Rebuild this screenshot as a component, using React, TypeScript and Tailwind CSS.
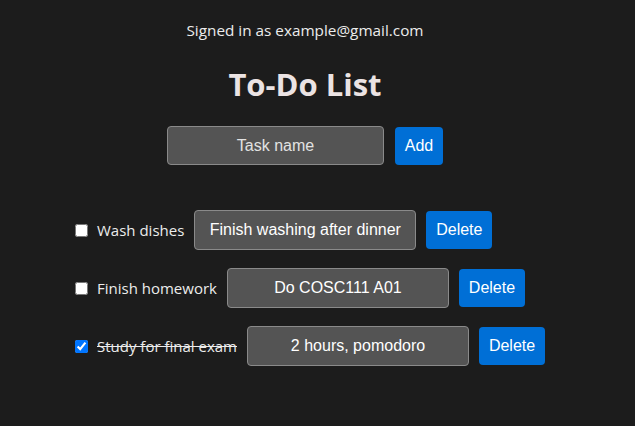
import React, { useState } from 'react';

interface Task {
  id: number;
  name: string;
  note: string;
  done: boolean;
}

const ui = { fontFamily: '"Open Sans", "Noto Sans", sans-serif' };
const arial = { fontFamily: '"Liberation Sans", Arial, sans-serif' };

export default function App() {
  const [tasks, setTasks] = useState<Task[]>([
    { id: 1, name: 'Wash dishes', note: 'Finish washing after dinner', done: false },
    { id: 2, name: 'Finish homework', note: 'Do COSC111 A01', done: false },
    { id: 3, name: 'Study for final exam', note: '2 hours, pomodoro', done: true },
  ]);
  const [draft, setDraft] = useState('');

  const toggle = (id: number) =>
    setTasks((t) => t.map((x) => (x.id === id ? { ...x, done: !x.done } : x)));

  return (
    <div className="min-h-[426px] w-full bg-[#1c1c1c] text-[#ececec]" style={ui}>
      <div className="flex flex-col items-center pt-[20px] pr-[25px]">
        <p className="text-[15.3px] leading-[20px]">Signed in as example@gmail.com</p>
        <h1 className="mt-[22px] text-[31px] font-bold leading-[44px] text-[#ebe3e3]">To-Do List</h1>

        {/* New task */}
        <div className="mt-[20px] flex items-center gap-[11px]">
          <input
            value={draft}
            onChange={(e) => setDraft(e.target.value)}
            placeholder="Task name"
            className="h-[39px] w-[217px] rounded-[4px] border border-[#8a8a8a] bg-[#545454] text-center text-[16px] text-white placeholder:text-[#e2e2e2] outline-none"
            style={arial}
          />
          <button
            className="h-[38px] w-[48px] rounded-[4px] bg-[#006fd6] text-[16px] text-white"
            style={arial}
          >
            Add
          </button>
        </div>
      </div>

      {/* Task rows */}
      <div className="mt-[45px] flex flex-col gap-[18px] pl-[75px]">
        {tasks.map((t) => (
          <div key={t.id} className="flex items-center">
            <input
              type="checkbox"
              checked={t.done}
              onChange={() => toggle(t.id)}
              className="m-0 h-[13px] w-[13px] accent-[#0075ff]"
            />
            <span
              className={`ml-[9px] text-[15px] ${t.done ? 'line-through' : ''}`}
            >
              {t.name}
            </span>
            <input
              defaultValue={t.note}
              className="ml-[10px] h-[40px] w-[222px] rounded-[4px] border border-[#8a8a8a] bg-[#545454] text-center text-[16px] text-white outline-none"
              style={arial}
            />
            <button
              className="ml-[10px] h-[38px] w-[66px] rounded-[4px] bg-[#006fd6] text-[16px] text-white"
              style={arial}
            >
              Delete
            </button>
          </div>
        ))}
      </div>
    </div>
  );
}
